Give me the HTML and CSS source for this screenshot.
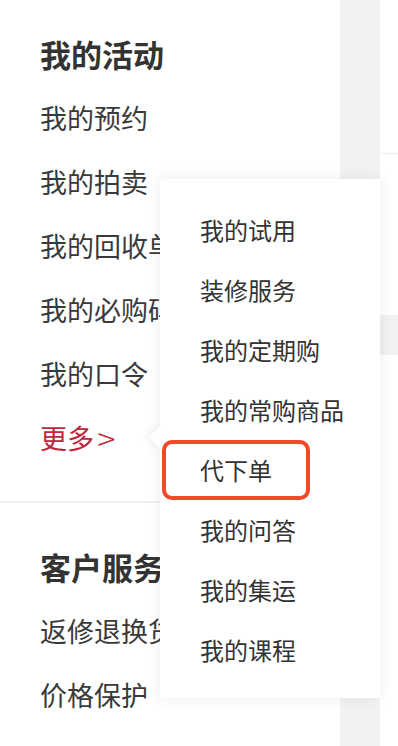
FILE: index.html
```html
<!DOCTYPE html>
<html lang="zh-CN">
<head>
<meta charset="utf-8">
<link rel="stylesheet" href="styles.css">
</head>
<body>
<div class="page">
  <div class="main">
    <section class="sec sec-first">
      <div class="head">我的活动</div>
      <div class="item">我的预约</div>
      <div class="item">我的拍卖</div>
      <div class="item">我的回收单</div>
      <div class="item">我的必购码</div>
      <div class="item">我的口令</div>
      <div class="item more">更多<span class="chev">&gt;</span></div>
    </section>
    <section class="sec">
      <div class="head">客户服务</div>
      <div class="item">返修退换货</div>
      <div class="item">价格保护</div>
      <div class="item">我的发票</div>
    </section>
  </div>
  <div class="strip"></div>
  <div class="side">
    <div class="side-top"></div>
    <div class="side-gap"></div>
    <div class="side-block"></div>
  </div>
</div>
<div class="popup">
  <div class="arrow"></div>
  <div class="pitem">我的试用</div>
  <div class="pitem">装修服务</div>
  <div class="pitem">我的定期购</div>
  <div class="pitem">我的常购商品</div>
  <div class="pitem active">代下单<span class="mark"></span></div>
  <div class="pitem">我的问答</div>
  <div class="pitem">我的集运</div>
  <div class="pitem">我的课程</div>
</div>
</body>
</html>
```
FILE: styles.css
```css
html, body {
  margin: 0;
  padding: 0;
  width: 398px;
  height: 746px;
  overflow: hidden;
  background: #fff;
  font-family: "Noto Sans CJK SC", "Noto Sans", sans-serif;
  color: #333;
}
.page {
  display: flex;
  height: 746px;
}
.main {
  width: 340px;
  background: #fff;
}
.sec {
  padding: 32px 0 0 40px;
}
.sec-first {
  padding-top: 22px;
  padding-bottom: 31px;
  border-bottom: 2px solid #f0f0f0;
}
.head {
  height: 64px;
  line-height: 64px;
  font-size: 31px;
  font-weight: bold;
  color: #333;
}
.item {
  height: 64px;
  line-height: 64px;
  font-size: 27px;
  color: #3a3a3a;
  white-space: nowrap;
}
.more {
  color: #c0263c;
}
.chev {
  display: inline-block;
  margin-left: 4px;
  font-size: 31px;
  line-height: 64px;
  vertical-align: top;
  transform: scaleX(1.1);
  font-weight: 300;
}
.strip {
  width: 40px;
  background: #f1f2f1;
}
.side {
  width: 18px;
  display: flex;
  flex-direction: column;
}
.side-top {
  height: 153px;
  border-bottom: 1px solid #eee;
}
.side-gap {
  height: 161px;
}
.side-block {
  height: 40px;
  background: #f2f2f2;
}
.popup {
  position: absolute;
  left: 160px;
  top: 179px;
  width: 220px;
  height: 519px;
  box-sizing: border-box;
  padding: 21px 0 18px 40px;
  background: #fff;
  box-shadow: 0 0 14px rgba(0, 0, 0, 0.08);
}
.arrow {
  position: absolute;
  left: -8px;
  top: 250px;
  width: 16px;
  height: 16px;
  background: #fff;
  transform: rotate(45deg);
  box-shadow: -3px 3px 6px rgba(0, 0, 0, 0.05);
}
.pitem {
  position: relative;
  height: 60px;
  line-height: 60px;
  font-size: 24px;
  color: #333;
}
.mark {
  position: absolute;
  left: -38px;
  top: 0;
  width: 148px;
  height: 60px;
  box-sizing: border-box;
  border: 4px solid #ef4a25;
  border-radius: 10px;
}
```
